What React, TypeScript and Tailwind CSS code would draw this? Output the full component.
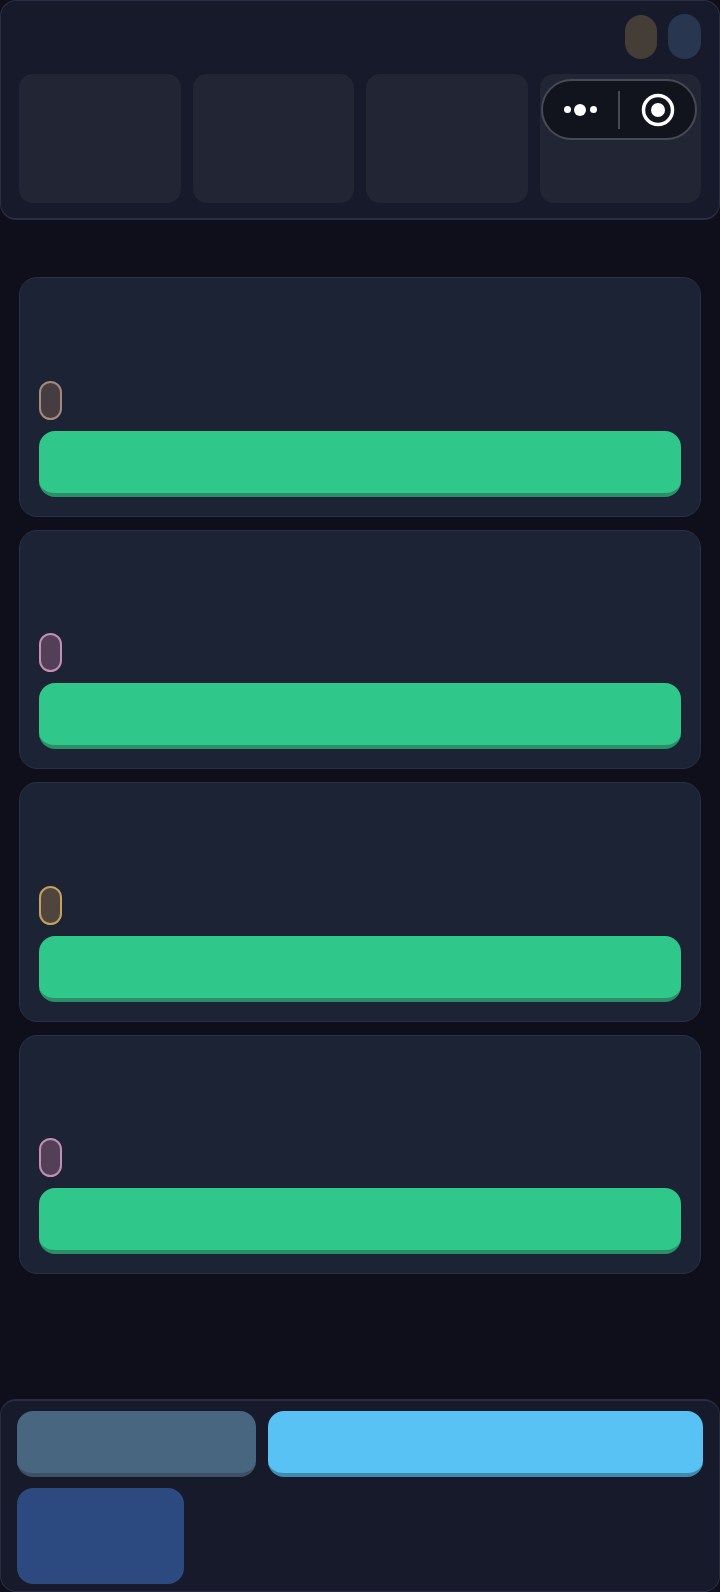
const CARDS = [
  { id: 'a', pill: 'bg-[#463d42] border-[#a5897e]' },
  { id: 'b', pill: 'bg-[#514058] border-[#c48db4]' },
  { id: 'c', pill: 'bg-[#4f453c] border-[#c5a05e]' },
  { id: 'd', pill: 'bg-[#514058] border-[#c48db4]' },
]

function Capsule() {
  return (
    <div className="absolute top-[79px] left-[541px] flex h-[61px] w-[156px] items-center rounded-full border-2 border-[#474a54] bg-[#11141c]">
      <div className="mr-px flex w-[74px] items-center justify-center gap-[3.5px]">
        <span className="h-[7px] w-[7px] rounded-full bg-white" />
        <span className="h-3 w-3 rounded-full bg-white" />
        <span className="h-[7px] w-[7px] rounded-full bg-white" />
      </div>
      <div className="h-[38px] w-0.5 bg-[#474a54]" />
      <div className="flex flex-1 items-center justify-center">
        <svg width="34" height="34" viewBox="0 0 34 34" fill="none">
          <circle cx="17" cy="17" r="14.5" stroke="white" strokeWidth="3.5" />
          <circle cx="17" cy="17" r="7" fill="white" />
        </svg>
      </div>
    </div>
  )
}

export default function App() {
  return (
    <div className="relative flex h-[1592px] w-[720px] flex-col overflow-hidden bg-[#0e0f1a]">
      <header className="h-[220px] shrink-0 rounded-2xl border border-b-2 border-[#2a2d43] bg-[#161a2a] px-[18px] pt-[13px]">
        <div className="flex justify-end gap-[11px]">
          <div className="mt-px h-[44px] w-8 rounded-full bg-[#453e36]" />
          <div className="h-[45px] w-[33px] rounded-full bg-[#283650]" />
        </div>
        <div className="mt-[15px] grid grid-cols-4 gap-3">
          <div className="h-[129px] rounded-[14px] bg-[#212534]" />
          <div className="h-[129px] rounded-[14px] bg-[#212534]" />
          <div className="h-[129px] rounded-[14px] bg-[#212534]" />
          <div className="h-[129px] rounded-[14px] bg-[#212534]" />
        </div>
      </header>

      <main className="flex flex-col gap-[13px] px-[19px] pt-[57px]">
        {CARDS.map(card => (
          <div key={card.id} className="flex h-[239.5px] flex-col justify-end rounded-[18px] border border-[#2a3045] bg-[#1c2335] px-[19px] pb-[19px]">
            <div className={`h-[39px] w-[23px] rounded-full border-2 ${card.pill}`} />
            <div className="mt-[11px] h-[66px] rounded-2xl border-b-4 border-[#2a8f66] bg-[#30c78a]" />
          </div>
        ))}
      </main>

      <footer className="mt-auto flex h-[193px] shrink-0 flex-col gap-[11px] rounded-2xl border border-t-2 border-[#2a2b42] bg-[#161a2a] pt-[10px] pr-4 pl-4">
        <div className="flex gap-3">
          <div className="h-[66px] w-[239px] rounded-2xl border-b-4 border-[#3d5064] bg-[#48667f]" />
          <div className="h-[66px] flex-1 rounded-2xl border-b-4 border-[#3f8bae] bg-[#58c2f5]" />
        </div>
        <div className="h-[96px] w-[167px] rounded-2xl bg-[#2c4a80]" />
      </footer>

      <Capsule />
    </div>
  )
}
